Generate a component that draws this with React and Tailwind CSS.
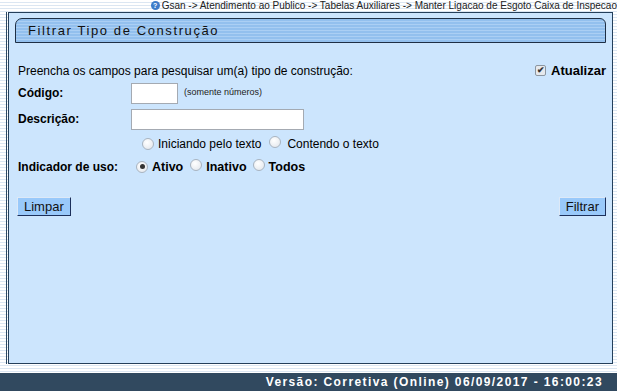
const stripes =
  "bg-[repeating-linear-gradient(to_bottom,#ffffff_0px,#ffffff_2px,#dbe6f2_2px,#dbe6f2_3px)]";

const Radio = ({ checked }) => (
  <span className="inline-flex h-[12px] w-[12px] items-center justify-center rounded-full border border-[#a9b4c0] bg-[radial-gradient(circle_at_40%_35%,#ffffff,#dfe4ea)]">
    {checked && <span className="h-[5px] w-[5px] rounded-full bg-[#333]" />}
  </span>
);

export default function App() {
  return (
    <div
      className={`flex h-[391px] w-[617px] flex-col overflow-hidden ${stripes} font-['Liberation_Sans',Arial,sans-serif] text-black`}
    >
      {/* Breadcrumb */}
      <div className="flex h-[11px] items-center justify-end overflow-hidden whitespace-nowrap pl-[147px] text-[10px] leading-none text-[#222]">
        <span className="mr-[2px] flex h-[9px] w-[9px] shrink-0 items-center justify-center rounded-full bg-[#3d7cc9] text-[7px] font-bold text-white">
          ?
        </span>
        <span className="overflow-hidden">
          Gsan -&gt; Atendimento ao Publico -&gt; Tabelas Auxiliares -&gt; Manter Ligacao de Esgoto Caixa de Inspecao
        </span>
      </div>

      <div className="mt-[1px] flex h-[352px]">
        <div className="w-[7px] border-r border-[#2b4863]" />
        <div className="ml-[1px] mr-[4px] flex flex-1 flex-col border border-[#243f5a] bg-[#cce5fd] px-[6px] pt-[5px]">
          {/* Header */}
          <div className="flex h-[25px] items-center rounded-tl-[7px] rounded-tr-[6px] border border-[#1e2f45] bg-[repeating-linear-gradient(to_bottom,#93c0ee_0px,#93c0ee_2px,#abcff4_2px,#abcff4_3px)] pl-[12px] text-[13px] tracking-[1.6px] text-[#111]">
            Filtrar Tipo de Construção
          </div>

          <div className="mt-[18px] flex items-center justify-between pl-[3px] text-[12px]">
            <span>Preencha os campos para pesquisar um(a) tipo de construção:</span>
            <span className="flex items-center gap-[5px] text-[13px] font-bold">
              <span className="flex h-[11px] w-[11px] items-center justify-center rounded-[2px] border border-[#8c96a0] bg-[#e6e9ed] text-[9px] leading-none text-[#333]">
                ✔
              </span>
              Atualizar
            </span>
          </div>

          <div className="mt-[2px] flex items-center pl-[3px] text-[12px]">
            <span className="w-[113px] font-bold">Código:</span>
            <div className="h-[21px] w-[47px] border border-[#a4aab2] bg-white" />
            <span className="ml-[6px] text-[9px] text-[#222]">(somente números)</span>
          </div>

          <div className="mt-[5px] flex items-center pl-[3px] text-[12px]">
            <span className="w-[113px] font-bold">Descrição:</span>
            <div className="h-[21px] w-[173px] border border-[#a4aab2] bg-white" />
          </div>

          <div className="mt-[5px] flex items-center pl-[127px] text-[12px]">
            <Radio />
            <span className="ml-[4px]">Iniciando pelo texto</span>
            <span className="ml-[8px]">
              <Radio />
            </span>
            <span className="ml-[6px]">Contendo o texto</span>
          </div>

          <div className="mt-[5px] flex items-center pl-[3px] text-[12px]">
            <span className="w-[118px] font-bold">Indicador de uso:</span>
            <Radio checked />
            <span className="ml-[4px] text-[12.5px] font-bold">Ativo</span>
            <span className="ml-[7px]">
              <Radio />
            </span>
            <span className="ml-[4px] text-[12.5px] font-bold">Inativo</span>
            <span className="ml-[6px]">
              <Radio />
            </span>
            <span className="ml-[4px] text-[12.5px] font-bold">Todos</span>
          </div>

          <div className="mt-[21px] flex items-center justify-between pl-[2px] text-[13px]">
            <button className="h-[19px] border border-[#1c2f5a] border-l-[#dde9f7] border-t-[#dde9f7] bg-[#99c9fa] px-[6px] leading-none text-[#111]">
              Limpar
            </button>
            <button className="h-[19px] border border-[#1c2f5a] border-l-[#dde9f7] border-t-[#dde9f7] bg-[#99c9fa] px-[6px] leading-none text-[#111]">
              Filtrar
            </button>
          </div>
        </div>
      </div>

      {/* Footer */}
      <div className="mt-[9px] flex h-[18px] items-center justify-end bg-[#31495f] pr-[14px] text-[12px] font-bold tracking-[1.4px] text-white">
        Versão: Corretiva (Online) 06/09/2017 - 16:00:23
      </div>
    </div>
  );
}
